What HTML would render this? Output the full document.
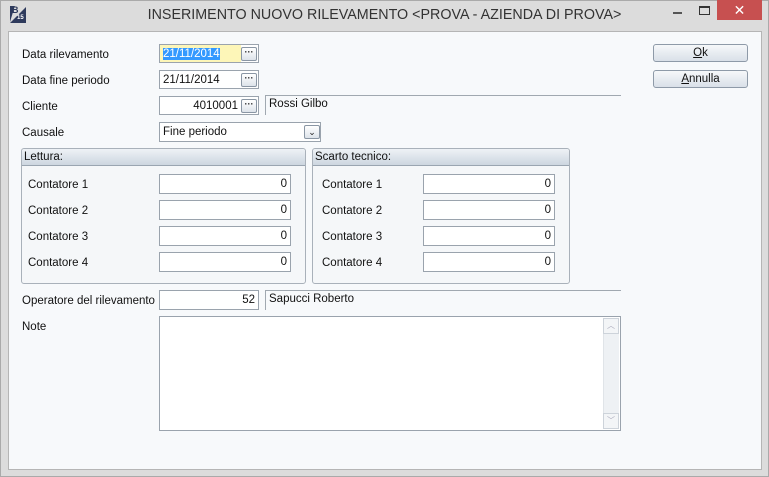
<!DOCTYPE html>
<html><head><style>
*{box-sizing:border-box;margin:0;padding:0}
body{width:769px;height:477px;background:#d6d6d6;font-family:"Liberation Sans",sans-serif;font-size:11.5px;color:#111;position:relative;overflow:hidden}
.a{position:absolute}
.frame{left:0;top:0;width:769px;height:477px;border:1px solid #aaa;background:#dcdcdc}
.client{left:8px;top:31px;width:754px;height:439px;background:#f7f9fb;border:1px solid #b5b5b5}
.title{left:0;top:7px;width:769px;text-align:center;font-family:"Liberation Sans",sans-serif;font-size:14.3px;color:#333}
.lbl{white-space:nowrap;margin-top:2px}
.inp{background:#fff;border:1px solid #9aa3ad;height:19px;line-height:19px;padding:0 3px;white-space:nowrap}
.r{text-align:right}
.btn3{width:16px;height:14px;border:1px solid #8a96a4;border-radius:2px;background:linear-gradient(#fff,#dde3ea);font-size:9px;line-height:8px;text-align:center;font-weight:bold;color:#222}
.ro{border-top:1px solid #a0a8b0;border-left:1px solid #a0a8b0;background:#f7f9fb;height:20px;padding:2px 3px}
.grp{border:1px solid #a9b1ba;border-radius:3px;background:#f5f7f9}
.gh{position:absolute;left:0;top:0;right:0;height:17px;background:linear-gradient(#eef2f6,#cdd6e0);border-bottom:1px solid #9aa5b1;padding:2px 2px;border-radius:3px 3px 0 0}
.b{width:95px;height:18px;border:1px solid #8e9aa8;border-radius:3px;background:linear-gradient(#f6f8fa,#d9e0e8);text-align:center;line-height:17px}
</style></head><body>
<div class="a frame"></div>
<div class="a" style="left:10px;top:7px;width:16px;height:16px;background:#2e3a5c;clip-path:polygon(0 100%,100% 0,100% 100%)"></div>
<div class="a" style="left:10px;top:6px;width:16px;height:16px;background:#2e3a5c;clip-path:polygon(0 0,30% 0,0 100%)"></div>
<div class="a" style="left:12px;top:5px;font-size:9px;color:#2e3a5c;font-weight:bold">B</div>
<div class="a" style="left:17px;top:15px;font-size:6px;color:#fff;font-weight:bold">15</div>
<div class="a title">INSERIMENTO NUOVO RILEVAMENTO &lt;PROVA - AZIENDA DI PROVA&gt;</div>
<div class="a" style="left:673px;top:12px;width:9px;height:2px;background:#555"></div>
<div class="a" style="left:699px;top:6px;width:11px;height:9px;border:1px solid #333;border-top-width:2px"></div>
<div class="a" style="left:717px;top:0;width:45px;height:20px;background:#c75050;color:#fff;text-align:center;font-size:14px;line-height:20px;font-family:'Liberation Sans',sans-serif">✕</div>
<div class="a client"></div>

<div class="a lbl" style="left:22px;top:47px">Data rilevamento</div>
<div class="a inp" style="left:159px;top:44px;width:100px;height:19px"><span style="background:#fdf6b8;position:absolute;left:0;top:0;width:81px;height:17px"></span><span style="position:relative;background:#3399ff;color:#fff">21/11/2014</span></div>
<div class="a btn3" style="left:241px;top:47px">···</div>
<div class="a lbl" style="left:22px;top:73px">Data fine periodo</div>
<div class="a inp" style="left:159px;top:70px;width:100px">21/11/2014</div>
<div class="a btn3" style="left:241px;top:73px">···</div>
<div class="a lbl" style="left:22px;top:99px">Cliente</div>
<div class="a inp r" style="left:159px;top:96px;width:100px;padding-right:20px">4010001</div>
<div class="a btn3" style="left:241px;top:99px">···</div>
<div class="a ro" style="left:265px;top:95px;width:356px">Rossi Gilbo</div>
<div class="a lbl" style="left:22px;top:125px">Causale</div>
<div class="a inp" style="left:159px;top:122px;width:162px;height:20px">Fine periodo</div>
<div class="a btn3" style="left:304px;top:125px;font-weight:normal;line-height:12px">⌄</div>

<div class="a grp" style="left:21px;top:148px;width:285px;height:136px"><div class="gh">Lettura:</div></div>
<div class="a grp" style="left:312px;top:148px;width:258px;height:136px"><div class="gh">Scarto tecnico:</div></div>
<div class="a lbl" style="left:28px;top:177px">Contatore 1</div>
<div class="a lbl" style="left:28px;top:203px">Contatore 2</div>
<div class="a lbl" style="left:28px;top:229px">Contatore 3</div>
<div class="a lbl" style="left:28px;top:255px">Contatore 4</div>
<div class="a inp r" style="left:159px;top:174px;width:132px;height:20px">0</div>
<div class="a inp r" style="left:159px;top:200px;width:132px;height:20px">0</div>
<div class="a inp r" style="left:159px;top:226px;width:132px;height:20px">0</div>
<div class="a inp r" style="left:159px;top:252px;width:132px;height:20px">0</div>
<div class="a lbl" style="left:322px;top:177px">Contatore 1</div>
<div class="a lbl" style="left:322px;top:203px">Contatore 2</div>
<div class="a lbl" style="left:322px;top:229px">Contatore 3</div>
<div class="a lbl" style="left:322px;top:255px">Contatore 4</div>
<div class="a inp r" style="left:423px;top:174px;width:132px;height:20px">0</div>
<div class="a inp r" style="left:423px;top:200px;width:132px;height:20px">0</div>
<div class="a inp r" style="left:423px;top:226px;width:132px;height:20px">0</div>
<div class="a inp r" style="left:423px;top:252px;width:132px;height:20px">0</div>

<div class="a lbl" style="left:22px;top:293px">Operatore del rilevamento</div>
<div class="a inp r" style="left:159px;top:290px;width:100px;height:20px">52</div>
<div class="a ro" style="left:265px;top:290px;width:356px">Sapucci Roberto</div>
<div class="a lbl" style="left:22px;top:319px">Note</div>
<div class="a" style="left:159px;top:316px;width:462px;height:115px;background:#fff;border:1px solid #9aa3ad"></div>
<div class="a" style="left:603px;top:318px;width:16px;height:111px;background:#eef1f4;border-left:1px solid #e0e4e8"></div>
<div class="a" style="left:603px;top:318px;width:16px;height:16px;border:1px solid #cdd3da;background:#f3f5f7;font-size:8px;color:#aab;text-align:center;line-height:14px">︿</div>
<div class="a" style="left:603px;top:413px;width:16px;height:16px;border:1px solid #cdd3da;background:#f3f5f7;font-size:8px;color:#aab;text-align:center;line-height:14px">﹀</div>

<div class="a b" style="left:653px;top:44px"><u>O</u>k</div>
<div class="a b" style="left:653px;top:70px"><u>A</u>nnulla</div>
</body></html>
